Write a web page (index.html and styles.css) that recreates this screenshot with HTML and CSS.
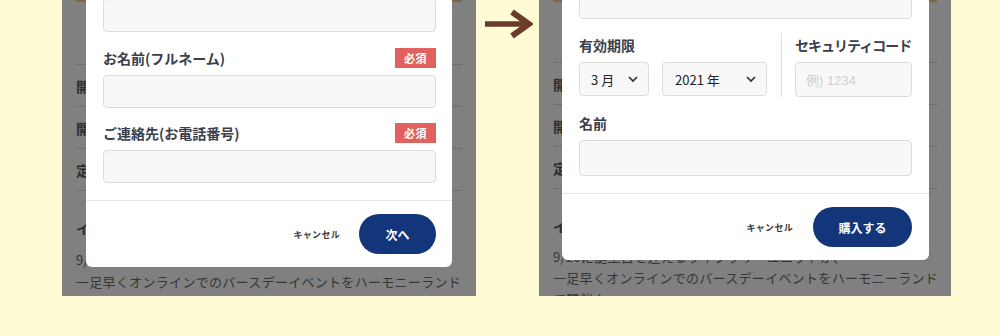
FILE: index.html
```html
<!DOCTYPE html>
<html lang="ja">
<head>
  <meta charset="UTF-8">
  <title>購入フロー</title>
  <link rel="stylesheet" href="styles.css">
</head>
<body>
  <main class="compare">
    <!-- Step 1: contact form -->
    <section class="shot">
      <div class="page">
        <div class="page-top"></div>
        <ul class="info">
          <li class="info-row"></li>
          <li class="info-row">開催日</li>
          <li class="info-row">開場時間</li>
          <li class="info-row">定員</li>
        </ul>
        <h2 class="page-heading">イベント詳細</h2>
        <p class="page-text">9/20に誕生日を迎えるライブラリーユニットが、<br>一足早くオンラインでのバースデーイベントをハーモニーランド<br>で開催！</p>
      </div>

      <div class="modal">
        <div class="modal-body">
          <div class="input input--cut"></div>
          <div class="field-head">
            <span class="label">お名前(フルネーム)</span>
            <span class="badge">必須</span>
          </div>
          <div class="input"></div>
          <div class="field-head field-head--tight">
            <span class="label">ご連絡先(お電話番号)</span>
            <span class="badge">必須</span>
          </div>
          <div class="input"></div>
        </div>
        <div class="modal-foot">
          <span class="cancel">キャンセル</span>
          <button class="primary primary--next">次へ</button>
        </div>
      </div>
    </section>

    <div class="arrow">
      <svg width="50" height="34" viewBox="0 0 50 34">
        <line x1="2" y1="17" x2="44" y2="17" stroke="#6b3b2b" stroke-width="5.5"/>
        <polyline points="29,5 46,17 29,29" fill="none" stroke="#6b3b2b" stroke-width="6"/>
      </svg>
    </div>

    <!-- Step 2: card details -->
    <section class="shot shot--right">
      <div class="page">
        <div class="page-top"></div>
        <ul class="info">
          <li class="info-row"></li>
          <li class="info-row">開催日</li>
          <li class="info-row">開場時間</li>
          <li class="info-row">定員</li>
        </ul>
        <h2 class="page-heading">イベント詳細</h2>
        <p class="page-text">9/20に誕生日を迎えるライブラリーユニットが、<br>一足早くオンラインでのバースデーイベントをハーモニーランド<br>で開催！</p>
      </div>

      <div class="modal modal--card">
        <div class="modal-body">
          <div class="input input--cut-deep"></div>
          <div class="expiry">
            <div class="col">
              <span class="label">有効期限</span>
              <div class="selects">
                <div class="select select--month">
                  <span>3 月</span>
                  <svg width="10" height="7" viewBox="0 0 10 7"><polyline points="1,1 5,5 9,1" fill="none" stroke="#333" stroke-width="1.7"/></svg>
                </div>
                <div class="select select--year">
                  <span>2021 年</span>
                  <svg width="10" height="7" viewBox="0 0 10 7"><polyline points="1,1 5,5 9,1" fill="none" stroke="#333" stroke-width="1.7"/></svg>
                </div>
              </div>
            </div>
            <div class="vline"></div>
            <div class="col">
              <span class="label label--narrow">セキュリティコード</span>
              <div class="input input--code"><span class="placeholder">例) 1234</span></div>
            </div>
          </div>
          <div class="field-head field-head--name">
            <span class="label">名前</span>
          </div>
          <div class="input input--tall"></div>
        </div>
        <div class="modal-foot">
          <span class="cancel">キャンセル</span>
          <button class="primary primary--buy">購入する</button>
        </div>
      </div>
    </section>
  </main>
</body>
</html>
```

FILE: styles.css
```css
/* Base */
body {
  margin: 0;
  background-color: #fffbd4;
  font-family: "Noto Sans CJK JP", "Noto Sans", sans-serif;
}

.compare {
  display: flex;
  align-items: flex-start;
  padding-left: 62px;
  height: 336px;
}

/* Dimmed page behind the modal */
.shot {
  position: relative;
  width: 414px;
  height: 296px;
  overflow: hidden;
  background-color: #808080;
}

.shot--right {
  width: 412px;
}

.page {
  padding: 0 14px;
  color: #2c2c2c;
}

.page-top {
  height: 2px;
  background-color: #7d6548;
}

.info {
  list-style: none;
  margin: 0;
  padding: 0;
}

.info-row {
  display: flex;
  align-items: center;
  height: 41px;
  border-bottom: 1px solid #707070;
  font-size: 14px;
  font-weight: bold;
}

.info-row:first-child {
  height: 62px;
}

.shot--right .info-row:first-child {
  height: 60px;
}

.page-heading {
  margin: 27px 0 0;
  font-size: 14px;
  line-height: 20px;
}

.page-text {
  margin: 11px 0 0;
  font-size: 13px;
  line-height: 22px;
  letter-spacing: 0.3px;
  white-space: nowrap;
  color: #363636;
}

.shot--right .page-text {
  margin-top: 10px;
  line-height: 21px;
}

/* Modal */
.modal {
  position: absolute;
  top: 0;
  left: 24px;
  width: 366px;
  background-color: #fff;
  border-radius: 0 0 6px 6px;
  overflow: hidden;
}

.modal--card {
  left: 23px;
  width: 367px;
}

.modal-body {
  display: flex;
  flex-direction: column;
  padding: 0 16px 17px 17px;
}

.modal--card .modal-body {
  padding-right: 17px;
}

.input {
  box-sizing: border-box;
  height: 33px;
  margin-top: 7px;
  background-color: #f8f8f8;
  border: 1px solid #dcdcdc;
  border-radius: 4px;
}

.input--cut {
  height: 34px;
  margin-top: -2px;
}

.input--cut-deep {
  height: 34px;
  margin-top: -15px;
}

.input--tall {
  height: 36px;
}

.input--code {
  display: flex;
  align-items: center;
  width: 117px;
  height: 35px;
  margin-top: 0;
  padding-left: 10px;
}

.placeholder {
  font-family: "Liberation Sans", "Noto Sans CJK JP", sans-serif;
  font-size: 13px;
  color: #cfcfcf;
}

.field-head {
  display: flex;
  justify-content: space-between;
  align-items: center;
  height: 20px;
  margin-top: 16px;
}

.field-head--tight {
  margin-top: 15px;
}

.label {
  font-size: 14px;
  font-weight: bold;
  line-height: 20px;
  color: #3b404c;
  white-space: nowrap;
}

.label--narrow {
  letter-spacing: -1px;
}

.badge {
  display: flex;
  align-items: center;
  justify-content: center;
  width: 41px;
  height: 20px;
  background-color: #e0615d;
  color: #fff;
  font-size: 11px;
  font-weight: bold;
  letter-spacing: 0.5px;
}

/* Card expiry row */
.expiry {
  display: flex;
  margin-top: 14px;
}

.col {
  display: flex;
  flex-direction: column;
  gap: 7px;
  padding-top: 2px;
}

.vline {
  flex: none;
  width: 1px;
  margin: 0 13px 0 14px;
  background-color: #dedede;
}

.selects {
  display: flex;
  gap: 13px;
}

.select {
  box-sizing: border-box;
  display: flex;
  justify-content: space-between;
  align-items: center;
  height: 34px;
  padding: 0 10px 0 11px;
  background-color: #f8f8f8;
  border: 1px solid #dcdcdc;
  border-radius: 4px;
  font-size: 13px;
  color: #222;
}

.select--month {
  width: 70px;
}

.select--year {
  width: 105px;
  padding-left: 12px;
}

.field-head--name {
  margin-top: 16px;
}

/* Footer */
.modal-foot {
  display: flex;
  justify-content: flex-end;
  align-items: center;
  gap: 19px;
  padding: 13px 16px;
  border-top: 1px solid #e6e6e6;
}

.modal--card .modal-foot {
  gap: 20px;
  padding-right: 17px;
}

.cancel {
  font-size: 9px;
  font-weight: bold;
  letter-spacing: 0.3px;
  color: #3a3a3a;
}

.primary {
  height: 40px;
  border: none;
  border-radius: 20px;
  background-color: #13357a;
  color: #fff;
  font-family: inherit;
  font-size: 12px;
  font-weight: bold;
}

.primary--next {
  width: 77px;
}

.primary--buy {
  width: 99px;
}

/* Arrow between steps */
.arrow {
  display: flex;
  justify-content: center;
  width: 63px;
  padding-top: 7px;
}
```
